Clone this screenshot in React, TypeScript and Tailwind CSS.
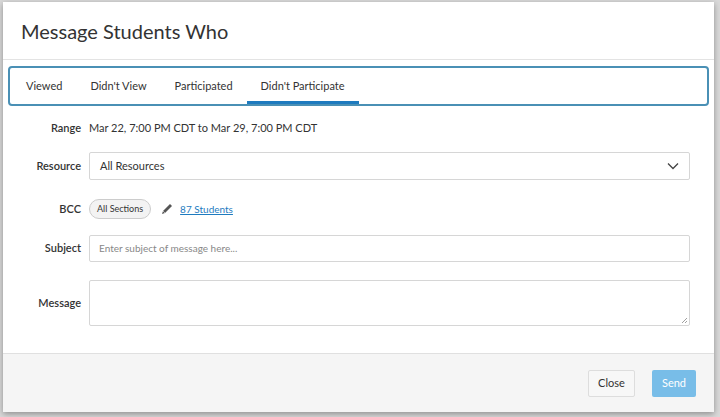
export default function App() {
  const label = "w-[78px] text-right font-semibold text-[11px] text-[#333] shrink-0";
  return (
    <div className="w-[720px] h-[417px] bg-[#d9d9d9] pt-[2px] pl-[3px] font-[family-name:Lato,sans-serif] text-[#333]">
      <div className="w-[711px] h-[410px] bg-white flex flex-col shadow-[0_2px_6px_rgba(0,0,0,0.35)]">
        <div className="h-[58px] border-b border-[#e3e3e3] flex items-center pl-[18px] text-[20px] text-[#333]">Message Students Who</div>
        <div className="mx-[5px] mt-[6px] h-[40px] border-2 border-[#4a90b5] rounded-[4px] flex items-stretch pl-[2px] text-[11px] text-[#333]">
          {["Viewed", "Didn't View", "Participated", "Didn't Participate"].map((t, i) => (
            <div key={t} className={`flex items-center px-[14px] ${i === 3 ? "border-b-[3px] border-[#1e7bbf] pt-[3px]" : ""}`}>{t}</div>
          ))}
        </div>
        <div className="flex flex-col pr-[24px]">
          <div className="flex items-center gap-[8px] mt-[15px] h-[14px]">
            <div className={label}>Range</div>
            <div className="text-[11px]">Mar 22, 7:00 PM CDT to Mar 29, 7:00 PM CDT</div>
          </div>
          <div className="flex items-center gap-[8px] mt-[17px]">
            <div className={label}>Resource</div>
            <div className="flex-1 h-[28px] border border-[#d6d6d6] rounded-[2px] flex items-center justify-between px-[10px] text-[11px]">
              All Resources
              <svg width="12" height="8" viewBox="0 0 12 8"><path d="M1 1.5 6 6.5 11 1.5" stroke="#444" strokeWidth="1.3" fill="none"/></svg>
            </div>
          </div>
          <div className="flex items-center gap-[8px] mt-[19px]">
            <div className={label}>BCC</div>
            <div className="h-[20px] px-[7px] rounded-full border border-[#ccc] bg-[#f3f3f3] text-[9px] flex items-center">All Sections</div>
            <svg width="14" height="14" viewBox="0 0 14 14" className="ml-[1px]"><path d="M2 12 3 9 10 2 12 4 5 11Z" fill="#555"/><path d="M3.3 9.3 4.7 10.7" stroke="#fff" strokeWidth="0.8"/></svg>
            <a className="text-[10px] text-[#1e7bbf] underline -ml-[2px]">87 Students</a>
          </div>
          <div className="flex items-center gap-[8px] mt-[16px]">
            <div className={label}>Subject</div>
            <div className="flex-1 h-[27px] border border-[#d6d6d6] rounded-[2px] flex items-center px-[9px] text-[10px] text-[#888]">Enter subject of message here...</div>
          </div>
          <div className="flex items-center gap-[8px] mt-[18px]">
            <div className={label}>Message</div>
            <div className="flex-1 h-[46px] border border-[#d6d6d6] rounded-[2px] relative">
              <svg width="7" height="7" viewBox="0 0 7 7" className="absolute right-[1px] bottom-[1px]"><path d="M6 1 1 6M6 4 4 6" stroke="#888" strokeWidth="0.8"/></svg>
            </div>
          </div>
        </div>
        <div className="mt-auto h-[59px] bg-[#f5f5f5] border-t border-[#e0e0e0] flex items-center justify-end gap-[17px] pr-[18px]">
          <div className="h-[27px] w-[47px] border border-[#ddd] bg-[#f7f7f7] rounded-[2px] flex items-center justify-center text-[11px]">Close</div>
          <div className="h-[27px] w-[44px] bg-[#78bde8] rounded-[2px] flex items-center justify-center text-[11px] text-white">Send</div>
        </div>
      </div>
    </div>
  );
}
